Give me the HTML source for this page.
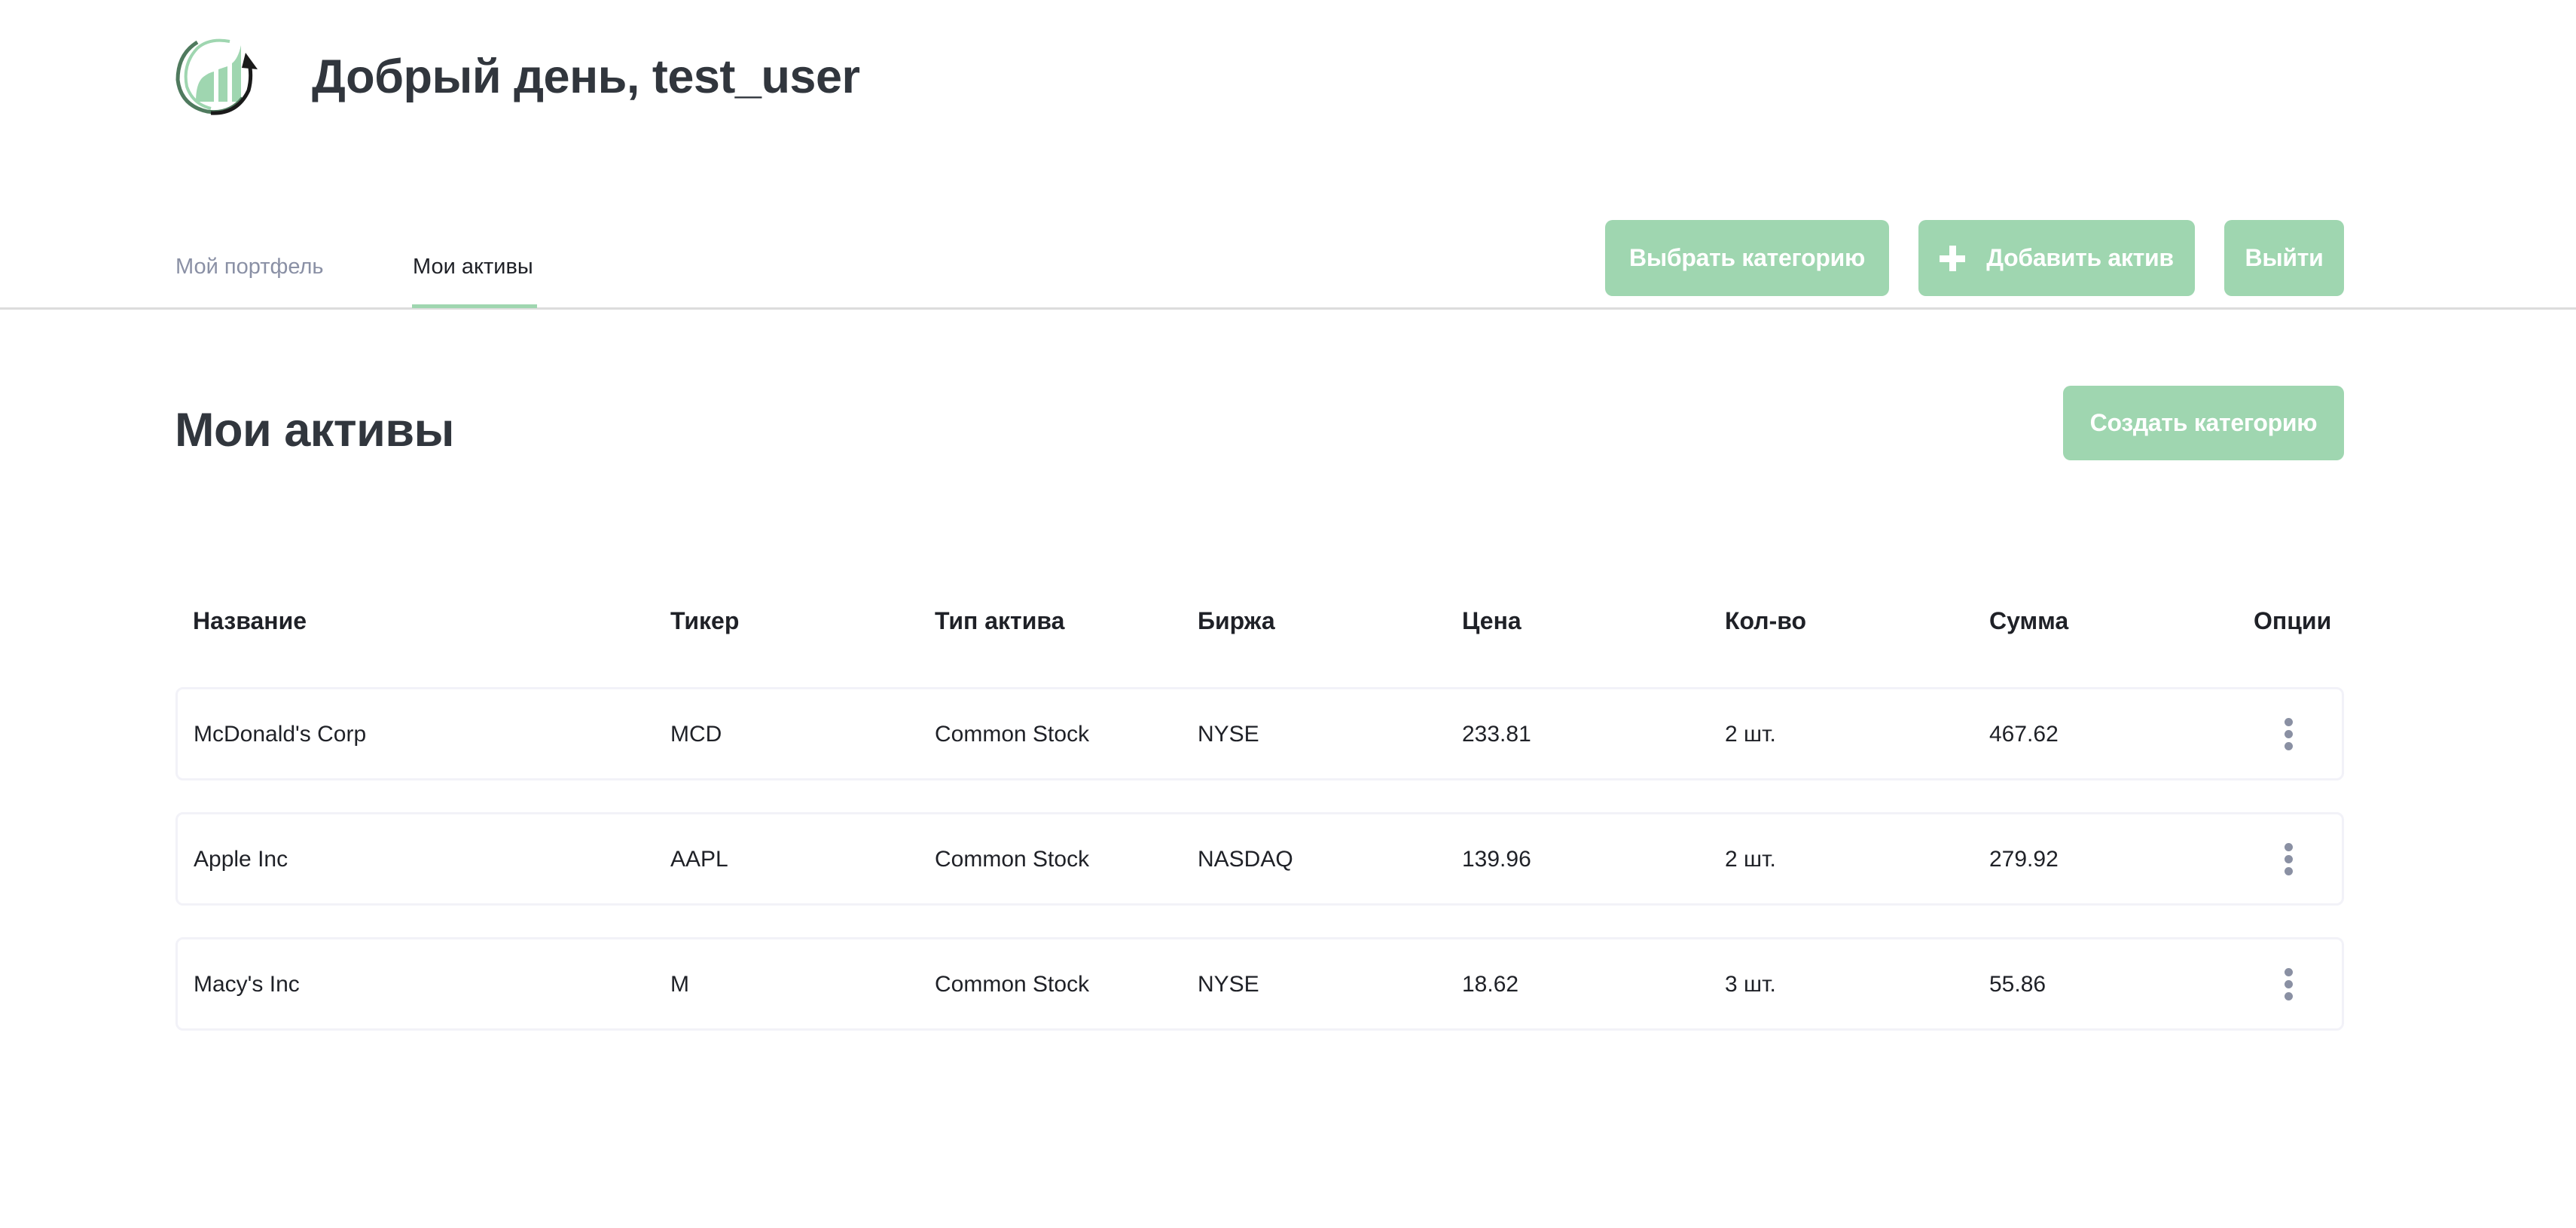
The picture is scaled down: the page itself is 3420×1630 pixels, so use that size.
<!DOCTYPE html>
<html><head><meta charset="utf-8"><style>
*{margin:0;padding:0;box-sizing:border-box}
body{width:3420px;height:1630px;background:#fff;position:relative;overflow:hidden;font-family:"Liberation Sans","DejaVu Sans",sans-serif}
.a{position:absolute;white-space:nowrap}
.btn{position:absolute;background:#9fd6b0;border-radius:10px;color:#fff;font-weight:bold;font-size:32px;display:flex;align-items:center;justify-content:center;letter-spacing:-0.3px}
.th{position:absolute;top:804px;line-height:40px;font-size:32px;font-weight:bold;color:#1f2127}
.row{position:absolute;left:233px;width:2879px;height:124px;border:3px solid #f2f2f8;border-radius:10px}
.td{position:absolute;font-size:30px;color:#1f2127;line-height:40px}
.dots{position:absolute;left:3033px;width:10px}
.dots i{display:block;width:11px;height:11px;border-radius:50%;background:#8a90a3;margin-bottom:5px}
</style></head><body>
<svg class="a" style="left:220px;top:40px" width="140" height="120" viewBox="0 0 140 120">
<path d="M40 95 Q40 70 50 62 Q58 56 64 55 L64 95 Z M70 95 L70 52 L82 48 L82 95 Z M88 95 L88 44 Q96 38 100 20 L100 95 Z" fill="#9fd6b0"/>
<path d="M85 15 Q58 10 42 24 Q22 45 28 75 Q36 98 60 104" fill="none" stroke="#9fd6b0" stroke-width="4"/>
<path d="M42 16 Q16 32 16 66 Q20 100 55 108 Q85 112 102 90" fill="none" stroke="#4f7a5e" stroke-width="5"/>
<path d="M60 110 Q95 112 110 80 Q114 65 112 50" fill="none" stroke="#1a1a1a" stroke-width="5"/>
<path d="M106 30 L122 52 L101 50 Z" fill="#1a1a1a"/>
</svg>
<div class="a" style="left:414px;top:67px;font-size:63px;font-weight:bold;color:#31363d;line-height:70px;letter-spacing:-0.5px">Добрый день, test_user</div>
<div class="a" style="left:233px;top:336px;font-size:29px;color:#8a90a5;line-height:36px">Мой портфель</div>
<div class="a" style="left:548px;top:336px;font-size:29px;color:#1f2127;line-height:36px">Мои активы</div>
<div class="a" style="left:0;top:408px;width:3420px;height:3px;background:#dcdcdc"></div>
<div class="a" style="left:547px;top:404px;width:166px;height:5px;background:#9fd6b0"></div>
<div class="btn" style="left:2131px;top:292px;width:377px;height:101px">Выбрать категорию</div>
<div class="btn" style="left:2547px;top:292px;width:367px;height:101px"><svg width="34" height="34" viewBox="0 0 34 34" style="margin-right:28px"><rect x="13" y="0" width="9" height="34" fill="#fff"/><rect x="0" y="13" width="34" height="9" fill="#fff"/></svg>Добавить актив</div>
<div class="btn" style="left:2953px;top:292px;width:159px;height:101px">Выйти</div>
<div class="a" style="left:232px;top:536px;font-size:63px;font-weight:bold;color:#31363d;line-height:70px;letter-spacing:-0.5px">Мои активы</div>
<div class="btn" style="left:2739px;top:512px;width:373px;height:99px">Создать категорию</div>
<div class="th" style="left:256px">Название</div>
<div class="th" style="left:890px">Тикер</div>
<div class="th" style="left:1241px">Тип актива</div>
<div class="th" style="left:1590px">Биржа</div>
<div class="th" style="left:1941px">Цена</div>
<div class="th" style="left:2290px">Кол-во</div>
<div class="th" style="left:2641px">Сумма</div>
<div class="th" style="left:2992px">Опции</div>

<div class="row" style="top:912px"></div>
<div class="row" style="top:1078px"></div>
<div class="row" style="top:1244px"></div>

<div class="td" style="left:257px;top:955px">McDonald's Corp</div>
<div class="td" style="left:890px;top:955px">MCD</div>
<div class="td" style="left:1241px;top:955px">Common Stock</div>
<div class="td" style="left:1590px;top:955px">NYSE</div>
<div class="td" style="left:1941px;top:955px">233.81</div>
<div class="td" style="left:2290px;top:955px">2 шт.</div>
<div class="td" style="left:2641px;top:955px">467.62</div>
<div class="dots" style="top:953px"><i></i><i></i><i></i></div>

<div class="td" style="left:257px;top:1121px">Apple Inc</div>
<div class="td" style="left:890px;top:1121px">AAPL</div>
<div class="td" style="left:1241px;top:1121px">Common Stock</div>
<div class="td" style="left:1590px;top:1121px">NASDAQ</div>
<div class="td" style="left:1941px;top:1121px">139.96</div>
<div class="td" style="left:2290px;top:1121px">2 шт.</div>
<div class="td" style="left:2641px;top:1121px">279.92</div>
<div class="dots" style="top:1119px"><i></i><i></i><i></i></div>

<div class="td" style="left:257px;top:1287px">Macy's Inc</div>
<div class="td" style="left:890px;top:1287px">M</div>
<div class="td" style="left:1241px;top:1287px">Common Stock</div>
<div class="td" style="left:1590px;top:1287px">NYSE</div>
<div class="td" style="left:1941px;top:1287px">18.62</div>
<div class="td" style="left:2290px;top:1287px">3 шт.</div>
<div class="td" style="left:2641px;top:1287px">55.86</div>
<div class="dots" style="top:1285px"><i></i><i></i><i></i></div>
</body></html>
